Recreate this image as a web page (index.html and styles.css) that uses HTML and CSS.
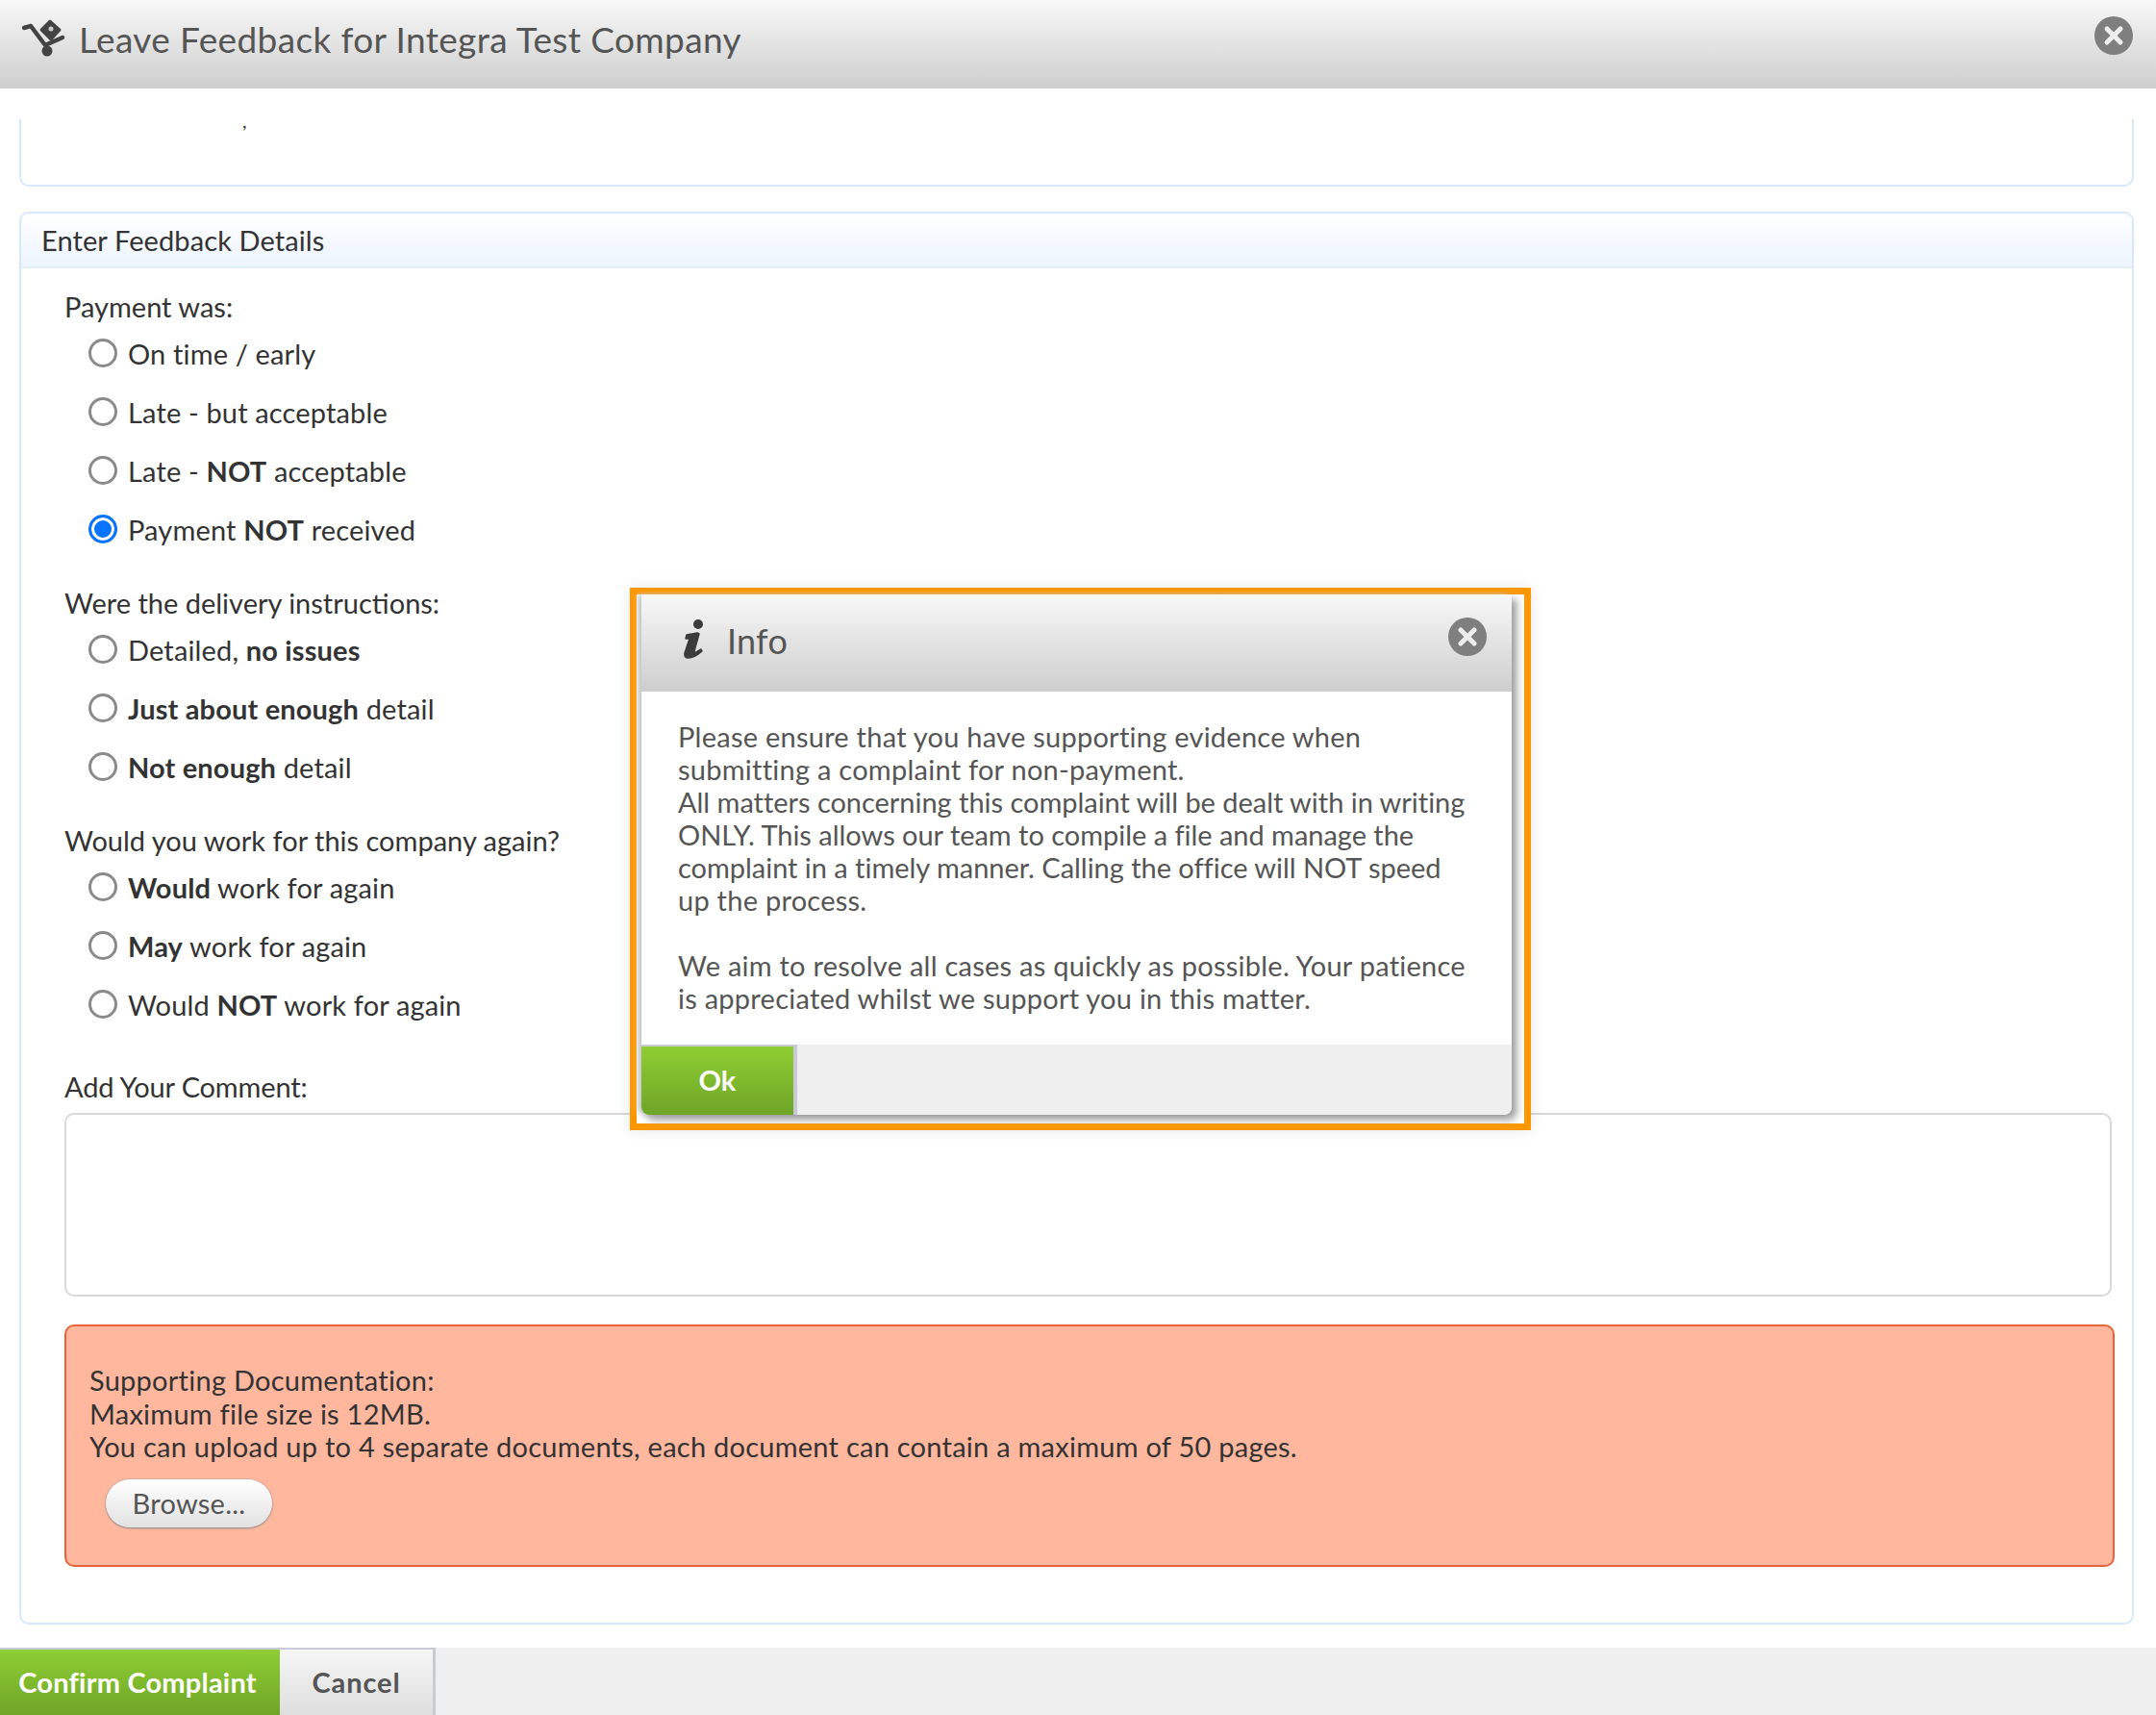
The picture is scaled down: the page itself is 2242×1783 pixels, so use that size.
FILE: index.html
```html
<!DOCTYPE html>
<html lang="en">
<head>
<meta charset="utf-8">
<title>Leave Feedback</title>
<link rel="stylesheet" href="styles.css">
</head>
<body>
<div class="page">
  <header class="top">
    <svg class="cart" viewBox="0 0 60 50" width="60" height="50">
      <path d="M10 15 L17 13 L32 33 L50 25" fill="none" stroke="#444" stroke-width="4.5" stroke-linecap="round" stroke-linejoin="round"/>
      <path d="M37 8 L47 17 L38 27 L28 17 Z" fill="#444" stroke="#444" stroke-width="3" stroke-linejoin="round"/>
      <circle cx="38" cy="16" r="2.5" fill="#ccc"/>
      <circle cx="34" cy="39" r="5.5" fill="#444"/>
    </svg>
    <h1 class="top-title">Leave Feedback for Integra Test Company</h1>
    <span class="close close-top"><svg viewBox="0 0 40 40" width="40" height="40"><circle cx="20" cy="20" r="20" fill="#7f7f7f"/><path d="M13 13 L27 27 M27 13 L13 27" stroke="#eee" stroke-width="5" stroke-linecap="round"/></svg></span>
  </header>

  <main class="content">
    <section class="panel panel-clipped"><span class="stray">,</span></section>
    <section class="panel panel-main">
      <h2 class="panel-head">Enter Feedback Details</h2>
      <div class="panel-body">
        <fieldset class="group">
          <p class="group-label">Payment was:</p>
          <label class="opt"><span class="radio"></span><span>On time / early</span></label>
          <label class="opt"><span class="radio"></span><span>Late - but acceptable</span></label>
          <label class="opt"><span class="radio"></span><span>Late - <b>NOT</b> acceptable</span></label>
          <label class="opt"><span class="radio radio-on"></span><span>Payment <b>NOT</b> received</span></label>
        </fieldset>
        <fieldset class="group">
          <p class="group-label">Were the delivery instructions:</p>
          <label class="opt"><span class="radio"></span><span>Detailed, <b>no issues</b></span></label>
          <label class="opt"><span class="radio"></span><span><b>Just about enough</b> detail</span></label>
          <label class="opt"><span class="radio"></span><span><b>Not enough</b> detail</span></label>
        </fieldset>
        <fieldset class="group">
          <p class="group-label">Would you work for this company again?</p>
          <label class="opt"><span class="radio"></span><span><b>Would</b> work for again</span></label>
          <label class="opt"><span class="radio"></span><span><b>May</b> work for again</span></label>
          <label class="opt"><span class="radio"></span><span>Would <b>NOT</b> work for again</span></label>
        </fieldset>
        <p class="comment-label">Add Your Comment:</p>
        <div class="comment"></div>
        <div class="docs">
          <p>Supporting Documentation:</p>
          <p>Maximum file size is 12MB.</p>
          <p>You can upload up to 4 separate documents, each document can contain a maximum of 50 pages.</p>
          <span class="browse">Browse...</span>
        </div>
      </div>
    </section>
  </main>

  <footer class="bottom">
    <span class="btn btn-green btn-confirm">Confirm Complaint</span>
    <span class="btn btn-cancel">Cancel</span>
  </footer>

  <div class="highlight">
    <div class="dialog">
      <div class="dialog-head">
        <svg class="info-icon" viewBox="0 0 24 42" width="24" height="42">
          <circle cx="17" cy="5" r="5" fill="#3c3c3c"/>
          <path d="M5 16 L16 14 L18 15 L13 33 Q13 35 15 34 L20 31 L21 33 Q13 40 7 40 Q2 40 3 35 L8 20 L4 20 Z" fill="#3c3c3c" stroke="#3c3c3c" stroke-width="1.5" stroke-linejoin="round"/>
        </svg>
        <span class="dialog-title">Info</span>
        <span class="close close-dialog"><svg viewBox="0 0 40 40" width="40" height="40"><circle cx="20" cy="20" r="20" fill="#7f7f7f"/><path d="M13 13 L27 27 M27 13 L13 27" stroke="#eee" stroke-width="5" stroke-linecap="round"/></svg></span>
      </div>
      <div class="dialog-body">
        <p>Please ensure that you have supporting evidence when<br>submitting a complaint for non-payment.<br><span class="tight">All matters concerning this complaint will be dealt with in writing<br>ONLY. This allows our team to compile a file and manage the<br>complaint in a timely manner. Calling the office will NOT speed</span><br>up the process.</p>
        <p class="para">We aim to resolve all cases as quickly as possible. Your patience<br>is appreciated whilst we support you in this matter.</p>
      </div>
      <div class="dialog-foot"><span class="btn btn-green btn-ok">Ok</span></div>
    </div>
  </div>
</div>
</body>
</html>
```
FILE: styles.css
```css
* { box-sizing: border-box; }
html, body { margin: 0; padding: 0; }
body { font-family: "Lato", "Liberation Sans", sans-serif; font-size: 29px; letter-spacing: 0.25px; color: #333; background: #fff; }
p, h1, h2 { margin: 0; font-weight: 400; }
b { font-weight: 700; }

.page { position: relative; width: 2242px; height: 1783px; display: flex; flex-direction: column; overflow: hidden; }

.top { height: 92px; flex: none; display: flex; align-items: center; padding: 0 24px 0 15px; background: linear-gradient(#f8f8f8, #cecece); }
.cart { margin-top: -14px; margin-right: 7px; width: 60px; height: 50px; flex: none; }
.top-title { font-size: 37px; letter-spacing: 0.37px; color: #555; flex: 1; margin-top: -12px; }
.close { display: block; width: 40px; height: 40px; }
.close svg { display: block; }
.close-top { margin-top: -18px; }

.content { flex: 1; padding: 32px 23px 24px 20px; display: flex; flex-direction: column; gap: 26px; }
.panel { border: 2px solid #d6e8fd; border-radius: 10px; }
.panel-clipped { height: 70px; flex: none; border-top: 0; border-top-left-radius: 0; border-top-right-radius: 0; padding-left: 230px; }
.stray { display: block; font-size: 20px; line-height: 2px; color: #333; }
.panel-main { flex: 1; display: flex; flex-direction: column; }
.panel-head { height: 57px; flex: none; display: flex; align-items: center; padding-left: 21px; font-size: 29px; letter-spacing: 0.1px; background: linear-gradient(#fff, #ecf4fe); border-bottom: 2px solid #e2eefb; border-radius: 8px 8px 0 0; }
.panel-body { flex: 1; padding: 23px 21px 0 45px; }

.group { border: 0; margin: 0 0 30px; padding: 0; }
.group-label { line-height: 34px; letter-spacing: 0; }
.opt { display: flex; align-items: center; height: 61px; padding-left: 25px; letter-spacing: 0.15px; }
.opt span:last-child { position: relative; top: 1px; }
.radio { width: 30px; height: 30px; flex: none; border: 3px solid #8a8a8a; border-radius: 50%; margin-right: 11px; background: #fff; }
.radio-on { border-color: #0a74ff; background: #0a74ff; box-shadow: inset 0 0 0 3px #fff; }

.comment-label { line-height: 34px; margin-top: 39px; letter-spacing: -0.15px; }
.comment { height: 191px; margin-top: 10px; border: 2px solid #d9d9d9; border-radius: 10px; background: #fff; }
.docs { margin-top: 29px; margin-right: -3px; height: 252px; padding: 39px 24px 0; background: #ffb79d; border: 2px solid #e5643a; border-radius: 10px; line-height: 34.5px; }
.browse { display: inline-flex; align-items: center; justify-content: center; width: 173px; height: 50px; margin: 16px 0 0 17px; border-radius: 25px; color: #555; background: linear-gradient(#fff, #e2e2e2); box-shadow: 0 1px 2px #888, 0 0 2px #999; line-height: 1; }

.bottom { flex: none; height: 70px; display: flex; background: #efefef; }
.btn { display: flex; align-items: center; justify-content: center; font-size: 29px; letter-spacing: 0.2px; font-weight: 700; border-top: 2px solid #c8cad6; padding-bottom: 2px; }
.btn-green { color: #fff; background: linear-gradient(#8fce33, #6fa527); }
.btn-confirm { width: 291px; padding-right: 5px; }
.btn-cancel { width: 162px; color: #555; letter-spacing: 0.9px; background: linear-gradient(#f6f6f6, #dedede); border-right: 3px solid #c8cad6; }

.highlight { position: absolute; left: 655px; top: 611px; width: 937px; height: 564px; border: 7px solid #ff9800; padding: 0 13px 9px 5px; background: #fff; box-shadow: 0 0 14px rgba(0,0,0,.1); }
.dialog { height: 100%; display: flex; flex-direction: column; background: #fff; border-radius: 0 0 8px 8px; box-shadow: 5px 5px 8px #999, -4px 0 5px #ccc; }
.dialog-head { height: 101px; flex: none; display: flex; align-items: center; padding: 0 26px 0 42px; background: linear-gradient(#f8f8f8, #cecece); }
.info-icon { margin-right: 23px; margin-top: -8px; }
.dialog-title { flex: 1; font-size: 36px; color: #555; margin-top: -5px; }
.close-dialog { margin-top: -13px; }
.dialog-body { flex: 1; padding: 30px 20px 0 38px; line-height: 34px; color: #555; }
.tight { letter-spacing: -0.03px; }
.para { margin-top: 34px; }
.dialog-foot { height: 73px; flex: none; display: flex; background: #efefef; border-radius: 0 0 8px 8px; }
.btn-ok { width: 162px; border-right: 4px solid #c8cad6; border-radius: 0 0 0 8px; }
```
